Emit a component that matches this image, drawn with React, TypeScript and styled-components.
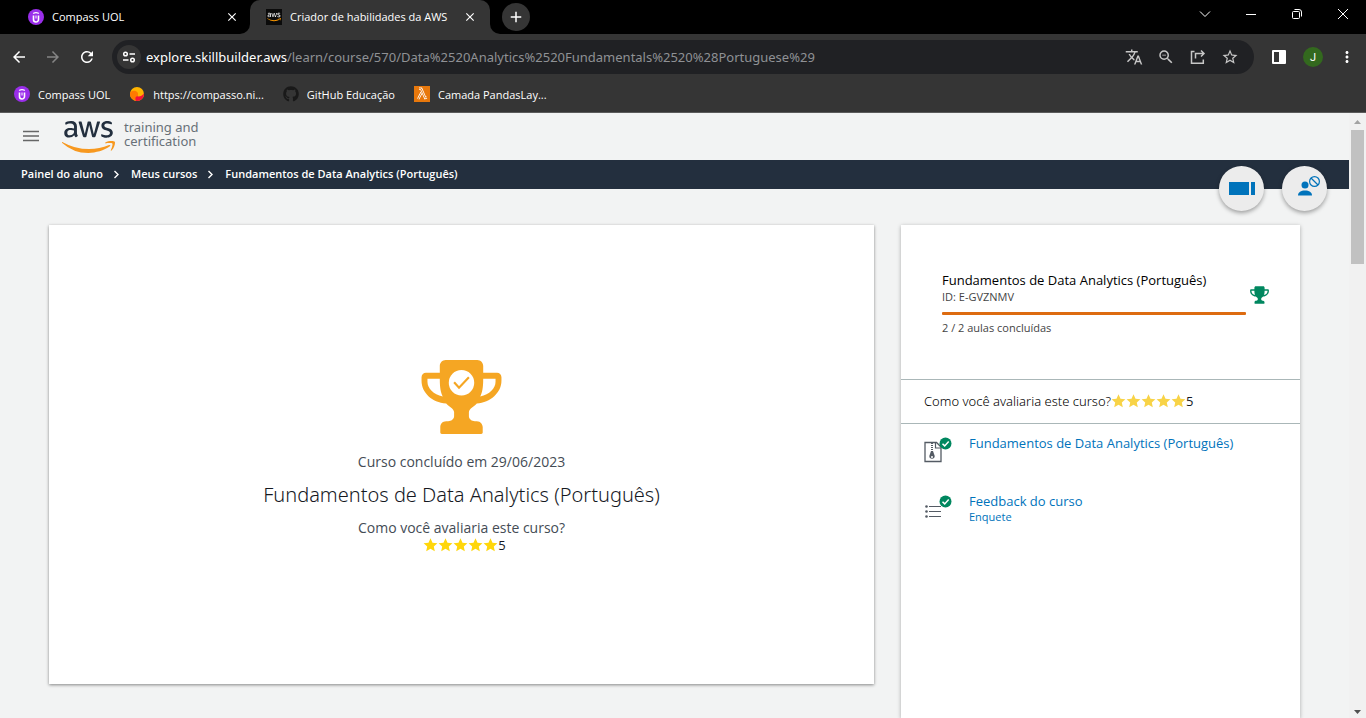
import React from "react";
import styled, { createGlobalStyle, css } from "styled-components";
import {
  MdArrowBack,
  MdArrowForward,
  MdRefresh,
  MdClose,
  MdAdd,
  MdTranslate,
  MdOutlineZoomOut,
  MdStarOutline,
  MdMoreVert,
} from "react-icons/md";
import { FaAws, FaGithub } from "react-icons/fa";

const GlobalStyle = createGlobalStyle`
  *, *::before, *::after { box-sizing: border-box; }
  body {
    margin: 0;
    background: #f2f3f3;
    font-family: "Open Sans", "Noto Sans", sans-serif;
    color: #000;
  }
  button, input { font: inherit; color: inherit; }
  button { padding: 0; border: 0; background: none; cursor: pointer; }
  h1, h2, p, ol, ul { margin: 0; padding: 0; }
  ol, ul { list-style: none; }
  a { color: inherit; text-decoration: none; }
  svg { display: block; flex: none; }
`;

/* ---------- Browser window ---------- */

const Window = styled.div`
  display: flex;
  flex-direction: column;
  height: 100vh;
  overflow: hidden;
`;

const BrowserChrome = styled.header`
  flex: none;
  background: #353535;
  border-bottom: 1px solid #5b5b5b;
  color: #fff;
  font-size: 11px;
`;

const TabStrip = styled.div`
  display: flex;
  height: 34px;
  background: #000;
`;

const TabCurve = styled.div<{ $side: "left" | "right" }>`
  width: 10px;
  height: 34px;
  background: #353535;

  &::before {
    content: "";
    display: block;
    height: 100%;
    background: #000;
    border-radius: ${(p) => (p.$side === "left" ? "0 0 10px 0" : "0 0 0 10px")};
  }
`;

const Tab = styled.div<{ $active?: boolean }>`
  display: flex;
  align-items: center;
  width: 240px;
  padding: ${(p) => (p.$active ? "0 12px 0 16px" : "0 0 0 28px")};
  ${(p) =>
    p.$active &&
    css`
      background: #353535;
      border-radius: 10px 10px 0 0;
    `}
`;

const TabTitle = styled.button`
  flex: 1;
  min-width: 0;
  margin-left: 8px;
  padding-bottom: 1px;
  overflow: hidden;
  text-align: left;
  white-space: nowrap;
`;

const TabClose = styled.button`
  display: grid;
  place-items: center;
  width: 16px;
  height: 16px;
`;

const NewTab = styled.button`
  display: grid;
  place-items: center;
  width: 28px;
  height: 28px;
  margin: 3px 0 0 2px;
  border-radius: 50%;
  background: #353535;
`;

const WindowControls = styled.div`
  display: flex;
  align-items: center;
  height: 28px;
  margin-left: auto;
`;

const WindowButton = styled.button`
  display: grid;
  place-items: center;
  width: 46px;
  height: 28px;
`;

const Toolbar = styled.div`
  display: flex;
  align-items: center;
  padding: 6px 2px;
  height: 46px;
`;

const ToolButton = styled.button<{ $dim?: boolean }>`
  display: grid;
  place-items: center;
  flex: none;
  width: 34px;
  height: 32px;
  color: ${(p) => (p.$dim ? "#858585" : "#fff")};
`;

const NavButtons = styled.div`
  display: flex;
`;

const Omnibox = styled.div`
  display: flex;
  flex: 1;
  align-items: center;
  height: 34px;
  margin: 0 8px;
  padding: 0 8px 0 5px;
  border-radius: 17px;
  background: #202124;
  color: #c7c7c7;
  font-family: "Noto Sans", sans-serif;
  font-size: 13px;
`;

const SiteInfo = styled.button`
  display: grid;
  place-items: center;
  width: 24px;
  height: 24px;
  margin-right: 5px;
  border-radius: 50%;
  background: #353535;
  color: #fff;
`;

const UrlHost = styled.label`
  color: #fff;
`;

const UrlPath = styled.input`
  flex: 1;
  min-width: 0;
  padding: 0;
  border: 0;
  outline: 0;
  background: none;
  color: #8f9195;
`;

const OmniButton = styled.button`
  display: grid;
  place-items: center;
  width: 32px;
  height: 32px;
`;

const BrowserActions = styled.div`
  display: flex;
  align-items: center;
`;

const Avatar = styled.span`
  display: grid;
  place-items: center;
  width: 20px;
  height: 20px;
  border-radius: 50%;
  background: #33691e;
  color: #fff;
  font-family: Roboto, sans-serif;
`;

const Bookmarks = styled.nav`
  display: flex;
  align-items: center;
  gap: 19px;
  height: 32px;
  padding: 0 14px 4px;
`;

const Bookmark = styled.a`
  display: flex;
  align-items: center;
  gap: 8px;
  white-space: nowrap;
`;

/* ---------- Page ---------- */

const Viewport = styled.div`
  display: flex;
  flex: 1;
  min-height: 0;
`;

const Page = styled.div`
  display: flex;
  flex: 1;
  flex-direction: column;
  min-width: 0;
  overflow: hidden;
  position: relative;
`;

const SiteHeader = styled.header`
  display: flex;
  flex: none;
  align-items: center;
  gap: 22px;
  height: 47px;
  padding: 0 22px;
`;

const MenuButton = styled.button`
  width: 18px;
  height: 18px;
  color: #666;
`;

const Brand = styled.a`
  display: flex;
  align-items: center;
  gap: 9px;
`;

const BrandText = styled.span`
  padding-bottom: 6px;
  color: #687078;
  font-family: "Noto Sans", sans-serif;
  font-size: 13px;
  line-height: 14px;
`;

const Breadcrumb = styled.nav`
  flex: none;
  height: 29px;
  padding: 0 21px;
  background: #232f3e;
  color: #fff;
  font-size: 11px;
  font-weight: 600;
  line-height: 28px;

  ol {
    display: flex;
  }
  li {
    display: flex;
    align-items: center;
  }
  svg {
    margin: 0 10px 0 9px;
  }
`;

const FloatingActions = styled.div`
  position: absolute;
  top: 53px;
  right: 22px;
  display: flex;
  gap: 18px;
`;

const RoundButton = styled.button`
  display: grid;
  place-items: center;
  width: 45px;
  height: 45px;
  border-radius: 50%;
  background: #ececec;
  box-shadow: 0 2px 4px rgba(0, 0, 0, 0.35);
`;

const Content = styled.main`
  display: flex;
  flex: 1;
  gap: 27px;
  min-height: 0;
  padding: 36px 49px 0;
`;

const CompletionCard = styled.section`
  display: flex;
  flex: 1;
  flex-direction: column;
  align-items: center;
  align-self: flex-start;
  padding: 135px 24px 132px;
  background: #fff;
  box-shadow: 0 1px 3px rgba(0, 0, 0, 0.45);

  > svg {
    margin-bottom: 18px;
  }
`;

const Note = styled.p`
  color: #444c55;
  font-size: 14px;
  line-height: 20px;
`;

const CourseTitle = styled.h1`
  margin: 8px 0;
  color: #16191f;
  font-family: "Noto Sans", sans-serif;
  font-size: 20px;
  font-weight: 300;
  line-height: 30px;
`;

const CardRating = styled.div`
  padding-left: 6px;
`;

const StarRow = styled.span<{ $color: string }>`
  display: flex;
  align-items: center;
  height: 14px;
  color: ${(p) => p.$color};
`;

const Score = styled.span`
  color: #16191f;
  font-family: "Open Sans", sans-serif;
  font-size: 13px;
  font-weight: 400;
  line-height: 14px;
`;

const Sidebar = styled.aside`
  flex: none;
  width: 399px;
  background: #fff;
  box-shadow: 0 1px 4px rgba(0, 0, 0, 0.3);
`;

const Summary = styled.div`
  display: flex;
  gap: 4px;
  height: 155px;
  padding: 46px 31px 0 41px;
  border-bottom: 1px solid #aab7b8;

  > svg {
    margin-top: 15px;
  }
`;

const SummaryText = styled.div`
  flex: 1;
`;

const SummaryTitle = styled.h2`
  font-size: 13px;
  font-weight: 500;
  line-height: 18px;
`;

const Small = styled.p`
  color: #444;
  font-size: 11px;
  line-height: 16px;
`;

const Progress = styled.div`
  height: 3px;
  margin: 7px 0 5px;
  border-radius: 1px;
  background: #dd6b10;
`;

const RatingRow = styled.div`
  display: flex;
  align-items: center;
  height: 44px;
  padding: 0 23px 2px;
  border-bottom: 1px solid #aab7b8;
  color: #000;
  font-family: "Noto Sans", sans-serif;
  font-size: 13px;
  font-weight: 300;
`;

const Lesson = styled.a`
  display: flex;
  gap: 16px;
  height: 58px;
  padding: 10px 23px 0;
  color: #0073bb;
`;

const LessonTitle = styled.span`
  display: block;
  font-size: 13px;
  font-weight: 500;
  line-height: 18px;
`;

const LessonKind = styled.span`
  display: block;
  font-size: 11px;
  line-height: 14px;
`;

const Scrollbar = styled.div`
  display: flex;
  flex: none;
  flex-direction: column;
  align-items: center;
  width: 17px;
  padding: 7px 0 4px;
  background: #f1f1f1;
`;

const ScrollThumb = styled.div`
  width: 13px;
  height: 134px;
  margin: 6px 0 auto;
  background: #c1c1c1;
`;

/* ---------- Drawings ---------- */

const UolIcon = () => (
  <svg width="16" height="16" viewBox="0 0 16 16" fill="none">
    <circle cx="8" cy="8" r="8" fill="#9a2eea" />
    <path d="M5.500 6.500v4a2.500 2.500 0 0 0 5 0v-4" stroke="#fff" strokeWidth="1.600" />
    <path d="M5.500 4.800c0-1.600 5-1.600 5 0" stroke="#fff" strokeWidth="1.300" />
    <path d="M8 6.500v3" stroke="#fff" strokeWidth="1" />
  </svg>
);

const CompassoIcon = () => (
  <svg width="16" height="16" viewBox="0 0 16 16">
    <circle cx="8" cy="8" r="7" fill="#ffb400" />
    <path d="M1.2 6.4C3 4.4 7 4.2 8.6 6.4c1 1.6-.2 3 .8 4.400L8 15A7 7 0 0 1 1.200 6.400z" fill="#ff7a00" />
    <path d="M14.900 7.200A7 7 0 0 1 7 14.900c-1.200-2-.6-4.400 1.200-4.600 2.600.6 4.800-.4 6.700-3.100z" fill="#f5103a" />
  </svg>
);

const AwsTabIcon = () => (
  <svg width="16" height="16" viewBox="0 0 16 16">
    <defs>
      <linearGradient id="aws-tab" gradientUnits="userSpaceOnUse" x1="0" y1="0" x2="0" y2="512">
        <stop offset="0.570" stopColor="#fff" />
        <stop offset="0.570" stopColor="#f90" />
      </linearGradient>
    </defs>
    <rect width="16" height="16" fill="#0b0b0b" />
    <FaAws x="1" y="1" size={14} fill="url(#aws-tab)" />
  </svg>
);

const LambdaIcon = () => (
  <svg width="16" height="16" viewBox="0 0 16 16" fill="none">
    <rect width="16" height="16" fill="#e8780c" />
    <path d="M5 2.800h2.200l4 9.200 1.600-.6M7.600 6.400 4.200 13" stroke="#fff" strokeWidth="2.400" />
    <path d="M5 2.800h2.200l4 9.200 1.600-.6M7.600 6.400 4.200 13" stroke="#e8780c" strokeWidth="0.900" />
  </svg>
);

const TuneIcon = () => (
  <svg width="14" height="14" viewBox="0 0 14 14" fill="none" stroke="currentColor" strokeWidth="1.500">
    <circle cx="3.500" cy="4" r="1.800" />
    <path d="M7.500 4H13M1 10h5.500" />
    <circle cx="10.500" cy="10" r="1.800" />
  </svg>
);

const ShareIcon = () => (
  <svg width="16" height="16" viewBox="0 0 16 16" fill="none" stroke="currentColor" strokeWidth="1.500">
    <path d="M4.500 2.500h-3v11.800h11.800V10.500" />
    <path d="M5.500 9.500v-5H14M11 1.500l3 3-3 3" />
  </svg>
);

const SidePanelIcon = () => (
  <svg width="14" height="14" viewBox="0 0 14 14">
    <rect width="14" height="14" rx="1" fill="#fff" />
    <rect x="2" y="2" width="5" height="10" fill="#353535" />
  </svg>
);

const AwsLogo = () => (
  <svg width="53" height="34" viewBox="0 115 640 410">
    <defs>
      <linearGradient id="aws-brand" gradientUnits="userSpaceOnUse" x1="0" y1="0" x2="0" y2="512">
        <stop offset="0.570" stopColor="#232f3e" />
        <stop offset="0.570" stopColor="#f7981f" />
      </linearGradient>
    </defs>
    <FaAws size={640} fill="url(#aws-brand)" />
  </svg>
);

const Chevron = () => (
  <svg width="9" height="9" viewBox="0 0 9 9" fill="none" stroke="#fff" strokeWidth="1.400">
    <path d="M2.500 1 6 4.500 2.500 8" />
  </svg>
);

const PanelIcon = () => (
  <svg width="26" height="13" viewBox="0 0 26 13" fill="#0073bb">
    <path d="M0 0h20v13H0zM22 0h4v13h-4z" />
  </svg>
);

const UserBlockedIcon = () => (
  <svg width="30" height="26" viewBox="-8 0 30 26">
    <circle cx="7" cy="9" r="3.500" fill="#0073bb" />
    <path d="M0 19.500c0-3.500 3-5 7-5s7 1.500 7 5z" fill="#0073bb" />
    <circle cx="16.500" cy="5.500" r="4.900" fill="#ececec" stroke="#0073bb" strokeWidth="1.200" />
    <path d="m13 2 7 7" stroke="#0073bb" strokeWidth="1.200" />
  </svg>
);

const TrophyBody =
  "M19 6c0-3 2.500-6 6-6h32c3.500 0 6 3 6 6v7h14c2.500 0 4.500 2 4.500 4.500V21c0 12-11 22-25 23-2 3-8 5-8 9v4c0 3 3 5 6 5h2c4 0 6 3.500 6 6v5.500c0 .8-.700 1.500-1.500 1.500h-40c-.8 0-1.500-.7-1.500-1.500V68c0-3 2-6 6-6h2c3 0 6-2 6-5v-4c0-4-6-6-8-9C11 43 .5 33 .5 21v-3.500C.5 15 2.500 13 5 13h14zM19 19H6.500v3c0 6.500 6 13 15.500 15-2-4-3-9-3-18zM63 19c0 9-1 14-3 18 9.500-2 15.500-8.500 15.500-15v-3z";

const TrophyIcon = ({ small }: { small?: boolean }) => (
  <svg
    width={small ? 19 : 81}
    height={small ? 18 : 74}
    viewBox="0 0 82 75"
    fill={small ? "#00875f" : "#f5a623"}
    fillRule="evenodd"
  >
    <path d={TrophyBody} />
    {!small && (
      <>
        <circle cx="41" cy="23" r="12.900" fill="#fff" />
        <path d="m33.500 22.500 5 5.500 10-10.500" fill="none" stroke="#f5a623" strokeWidth="2.200" />
      </>
    )}
  </svg>
);

const Star = () => (
  <svg width="15" height="14" viewBox="0 0 15 14" fill="currentColor">
    <path d="M7.500.3 9.500 4.700l4.900.5-3.600 3.200 1 4.900-4.300-2.500-4.300 2.500 1-4.900L.6 5.200l4.900-.5z" />
  </svg>
);

const CheckBadge = () => (
  <>
    <circle cx="21.500" cy="9.500" r="6" fill="#00875f" />
    <path d="m18.500 9.700 2.200 2.200 4-4.300" fill="none" stroke="#fff" strokeWidth="1.500" />
  </>
);

const ZipLessonIcon = () => (
  <svg width="29" height="29" viewBox="0 0 29 29" fill="none">
    <path d="M1 8.500h11.500L17 13v14.500H1z" stroke="#545b64" strokeWidth="1.300" />
    <path d="M11.500 8.500V14H17" stroke="#545b64" strokeWidth="1.200" />
    <path d="M8 9v8" stroke="#545b64" strokeWidth="2" strokeDasharray="1 1" />
    <path d="M7 17h2l1.700 5a2.600 2.600 0 1 1-5.400 0z" fill="#545b64" />
    <circle cx="8" cy="23" r="1" fill="#fff" />
    <CheckBadge />
  </svg>
);

const SurveyLessonIcon = () => (
  <svg width="29" height="29" viewBox="0 0 29 29" fill="none">
    <g fill="#545b64">
      <circle cx="2.500" cy="14.500" r="1.300" />
      <circle cx="2.500" cy="19.500" r="1.300" />
      <circle cx="2.500" cy="24.500" r="1.300" />
    </g>
    <path d="M5 14.500h12M5 19.500h12M5 24.500h12" stroke="#545b64" strokeWidth="1" />
    <CheckBadge />
  </svg>
);

const ScrollArrow = ({ up }: { up?: boolean }) => (
  <svg width="7" height="4" viewBox="0 0 7 4" fill={up ? "#a3a3a3" : "#505050"}>
    <path d={up ? "M0 4 3.500 0 7 4z" : "M0 0h7L3.500 4z"} />
  </svg>
);

const COURSE = "Fundamentos de Data Analytics (Português)";

const Rating = ({ color }: { color: string }) => (
  <StarRow $color={color}>
    {[1, 2, 3, 4, 5].map((n) => (
      <Star key={n} />
    ))}
    <Score>5</Score>
  </StarRow>
);

export default function App() {
  return (
    <Window>
      <GlobalStyle />
      <BrowserChrome>
        <TabStrip>
          <Tab>
            <UolIcon />
            <TabTitle>Compass UOL</TabTitle>
            <TabClose aria-label="Fechar">
              <MdClose size={14} />
            </TabClose>
          </Tab>
          <TabCurve $side="left" />
          <Tab $active>
            <AwsTabIcon />
            <TabTitle>Criador de habilidades da AWS</TabTitle>
            <TabClose aria-label="Fechar">
              <MdClose size={14} />
            </TabClose>
          </Tab>
          <TabCurve $side="right" />
          <NewTab aria-label="Nova guia">
            <MdAdd size={18} />
          </NewTab>
          <WindowControls>
            <WindowButton aria-label="Pesquisar guias">
              <svg width="12" height="12" viewBox="0 0 12 12" fill="none" stroke="#fff">
                <path d="m1 3.500 5 5 5-5" />
              </svg>
            </WindowButton>
            <WindowButton aria-label="Minimizar">
              <svg width="10" height="10" viewBox="0 0 10 10" stroke="#fff">
                <path d="M0 5.500h10" />
              </svg>
            </WindowButton>
            <WindowButton aria-label="Restaurar">
              <svg width="10" height="10" viewBox="0 0 10 10" fill="none" stroke="#fff">
                <rect x="0.500" y="2.500" width="7" height="7" rx="1" />
                <path d="M2.500.5H7A2.500 2.500 0 0 1 9.500 3v4.500" />
              </svg>
            </WindowButton>
            <WindowButton aria-label="Fechar janela">
              <svg width="10" height="10" viewBox="0 0 10 10" stroke="#fff">
                <path d="m0 0 10 10M10 0 0 10" />
              </svg>
            </WindowButton>
          </WindowControls>
        </TabStrip>
        <Toolbar>
          <NavButtons>
            <ToolButton aria-label="Voltar">
              <MdArrowBack size={18} />
            </ToolButton>
            <ToolButton aria-label="Avançar" $dim>
              <MdArrowForward size={18} />
            </ToolButton>
            <ToolButton aria-label="Recarregar">
              <MdRefresh size={18} />
            </ToolButton>
          </NavButtons>
          <Omnibox>
            <SiteInfo aria-label="Informações do site">
              <TuneIcon />
            </SiteInfo>
            <UrlHost htmlFor="url">explore.skillbuilder.aws</UrlHost>
            <UrlPath
              id="url"
              defaultValue="/learn/course/570/Data%2520Analytics%2520Fundamentals%2520%28Portuguese%29"
            />
            <OmniButton aria-label="Traduzir">
              <MdTranslate size={18} />
            </OmniButton>
            <OmniButton aria-label="Zoom">
              <MdOutlineZoomOut size={18} />
            </OmniButton>
            <OmniButton aria-label="Compartilhar">
              <ShareIcon />
            </OmniButton>
            <OmniButton aria-label="Favoritar">
              <MdStarOutline size={18} />
            </OmniButton>
          </Omnibox>
          <BrowserActions>
            <ToolButton aria-label="Painel lateral">
              <SidePanelIcon />
            </ToolButton>
            <ToolButton aria-label="Perfil">
              <Avatar>J</Avatar>
            </ToolButton>
            <ToolButton aria-label="Menu">
              <MdMoreVert size={18} />
            </ToolButton>
          </BrowserActions>
        </Toolbar>
        <Bookmarks>
          <Bookmark href="#uol">
            <UolIcon />
            Compass UOL
          </Bookmark>
          <Bookmark href="#compasso">
            <CompassoIcon />
            https://compasso.ni...
          </Bookmark>
          <Bookmark href="#github">
            <FaGithub size={16} color="#191919" />
            GitHub Educação
          </Bookmark>
          <Bookmark href="#pandas">
            <LambdaIcon />
            Camada PandasLay...
          </Bookmark>
        </Bookmarks>
      </BrowserChrome>

      <Viewport>
        <Page>
          <SiteHeader>
            <MenuButton aria-label="Menu">
              <svg width="18" height="18" viewBox="0 0 18 18" stroke="currentColor" strokeWidth="1.500">
                <path d="M1 3.500h16M1 8h16M1 12.500h16" />
              </svg>
            </MenuButton>
            <Brand href="#inicio">
              <AwsLogo />
              <BrandText>
                training and
                <br />
                certification
              </BrandText>
            </Brand>
          </SiteHeader>
          <Breadcrumb>
            <ol>
              <li>
                <a href="#painel">Painel do aluno</a>
                <Chevron />
              </li>
              <li>
                <a href="#cursos">Meus cursos</a>
                <Chevron />
              </li>
              <li>{COURSE}</li>
            </ol>
          </Breadcrumb>
          <Content>
            <CompletionCard>
              <TrophyIcon />
              <Note>Curso concluído em 29/06/2023</Note>
              <CourseTitle>{COURSE}</CourseTitle>
              <Note>Como você avaliaria este curso?</Note>
              <CardRating>
                <Rating color="#ffd60a" />
              </CardRating>
            </CompletionCard>
            <Sidebar>
              <Summary>
                <SummaryText>
                  <SummaryTitle>{COURSE}</SummaryTitle>
                  <Small>ID: E-GVZNMV</Small>
                  <Progress />
                  <Small>2 / 2 aulas concluídas</Small>
                </SummaryText>
                <TrophyIcon small />
              </Summary>
              <RatingRow>
                Como você avaliaria este curso?
                <Rating color="#f8d347" />
              </RatingRow>
              <Lesson href="#curso">
                <ZipLessonIcon />
                <span>
                  <LessonTitle>{COURSE}</LessonTitle>
                </span>
              </Lesson>
              <Lesson href="#enquete">
                <SurveyLessonIcon />
                <span>
                  <LessonTitle>Feedback do curso</LessonTitle>
                  <LessonKind>Enquete</LessonKind>
                </span>
              </Lesson>
            </Sidebar>
          </Content>
          <FloatingActions>
            <RoundButton aria-label="Alternar painel">
              <PanelIcon />
            </RoundButton>
            <RoundButton aria-label="Cancelar inscrição">
              <UserBlockedIcon />
            </RoundButton>
          </FloatingActions>
        </Page>
        <Scrollbar>
          <ScrollArrow up />
          <ScrollThumb />
          <ScrollArrow />
        </Scrollbar>
      </Viewport>
    </Window>
  );
}
